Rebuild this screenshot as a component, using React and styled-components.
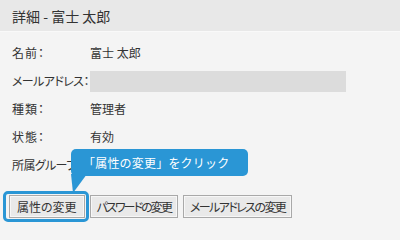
import React from "react";
import styled, { createGlobalStyle } from "styled-components";

const Global = createGlobalStyle`
  html, body { margin: 0; padding: 0; background: #f4f4f4; }
  body {
    font-family: "Noto Sans CJK JP", "Noto Sans", sans-serif;
    color: #333;
  }
`;

const Page = styled.div`
  position: relative;
  width: 400px;
  height: 232px;
  overflow: hidden;
  background: #f4f4f4;
`;

const Header = styled.div`
  height: 32px;
  box-sizing: border-box;
  display: flex;
  align-items: center;
  padding-left: 12px;
  background: #e8e8e8;
  border-bottom: 1px solid #f9f9f9;
  font-size: 14px;
  color: #333;
`;

const Details = styled.div`
  display: grid;
  grid-template-columns: 78px 1fr;
  grid-auto-rows: 28px;
  padding: 6px 0 0 12px;
  font-size: 12px;
`;

const Label = styled.div`
  display: flex;
  align-items: center;
  white-space: nowrap;
  font-feature-settings: "palt";
  letter-spacing: ${(p) => (p.$tight ? "-0.6px" : "1px")};
`;

const Value = styled.div`
  display: flex;
  align-items: center;
  white-space: nowrap;
`;

const Masked = styled.div`
  width: 256px;
  height: 21px;
  margin-top: 5px;
  background: #dcdcdc;
`;

const Actions = styled.div`
  display: flex;
  gap: 5px;
  padding: 17px 0 0 9px;
`;

const Slot = styled.div`
  position: relative;
  display: flex;
  &::after {
    content: "";
    display: ${(p) => (p.$highlight ? "block" : "none")};
    position: absolute;
    left: -6px;
    top: -4px;
    right: -4px;
    bottom: -4px;
    border: 3px solid #2a96d5;
    border-radius: 5px;
    pointer-events: none;
  }
`;

const Button = styled.button`
  height: 23px;
  box-sizing: border-box;
  padding: 0 ${(p) => p.$pad}px;
  background: #e9e9e9;
  border: 1px solid #a9a9a9;
  box-shadow: inset 0 0 0 1px #f7f7f7;
  border-radius: 0;
  font-family: "Noto Sans CJK JP", sans-serif;
  font-feature-settings: "palt";
  font-size: 12px;
  letter-spacing: ${(p) => p.$ls}px;
  color: #333;
  line-height: 21px;
  white-space: nowrap;
`;

const Bubble = styled.div`
  position: absolute;
  left: 71px;
  top: 149px;
  width: 177px;
  height: 27px;
  box-sizing: border-box;
  padding-left: 12px;
  display: flex;
  align-items: center;
  background: #2a96d5;
  border-radius: 5px;
  color: #fff;
  font-size: 12px;
  letter-spacing: 0.2px;
  white-space: nowrap;
`;

const Tail = styled.svg`
  position: absolute;
  left: 70px;
  top: 174px;
`;

export default function App() {
  const rows = [
    ["名前：", "富士 太郎"],
    ["メールアドレス：", null, true],
    ["種類：", "管理者"],
    ["状態：", "有効"],
    ["所属グループ：", "", true],
  ];
  return (
    <Page>
      <Global />
      <Header>詳細 - 富士 太郎</Header>
      <Details>
        {rows.map(([l, v, t]) => (
          <React.Fragment key={l}>
            <Label $tight={t}>{l}</Label>
            {v === null ? <Masked /> : <Value>{v}</Value>}
          </React.Fragment>
        ))}
      </Details>
      <Actions>
        <Slot $highlight>
          <Button $pad={7} $ls={0}>属性の変更</Button>
        </Slot>
        <Slot>
          <Button $pad={6} $ls={-1.9}>パスワードの変更</Button>
        </Slot>
        <Slot>
          <Button $pad={6} $ls={-1.6}>メールアドレスの変更</Button>
        </Slot>
      </Actions>
      <Tail width="20" height="20" viewBox="0 0 20 20">
        <polygon points="1,0 17,0 3,19" fill="#2a96d5" />
      </Tail>
      <Bubble>「属性の変更」をクリック</Bubble>
    </Page>
  );
}
